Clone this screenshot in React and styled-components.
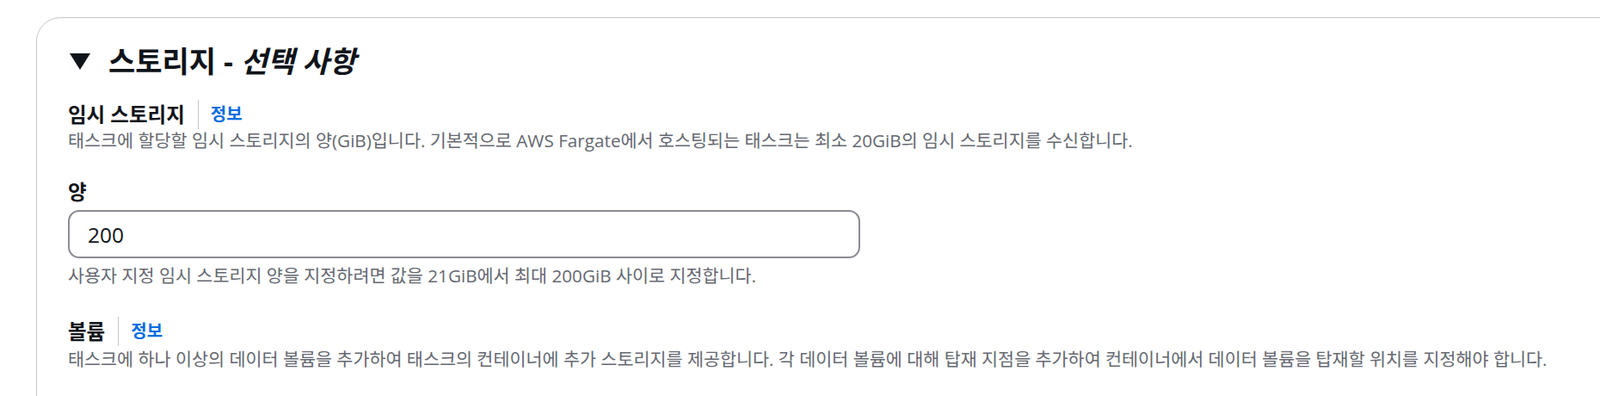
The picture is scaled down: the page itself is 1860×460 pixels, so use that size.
import React from 'react';
import styled, { createGlobalStyle } from 'styled-components';

const GlobalStyle = createGlobalStyle`
  html, body {
    margin: 0;
    padding: 0;
    background: #ffffff;
    overflow: hidden;
  }
  body {
    font-family: "Open Sans", "Noto Sans CJK KR", sans-serif;
    color: #0f141a;
  }
`;

const Page = styled.div`
  width: 1860px;
  height: 460px;
  padding: 20px 0 0 42px;
  box-sizing: border-box;
  overflow: hidden;
`;

const Card = styled.section`
  width: 1900px;
  min-height: 520px;
  border: 1px solid #c6c6cd;
  border-radius: 28px;
  box-sizing: border-box;
  padding: 30px 0 0 36px;
`;

const Header = styled.h2`
  display: flex;
  align-items: center;
  gap: 21px;
  margin: 0;
  height: 40px;
  font-size: 34px;
  line-height: 40px;
  font-weight: 700;
  color: #0f141a;
`;

const Caret = styled.svg`
  width: 24px;
  height: 19px;
  margin-left: 2px;
  flex: none;
`;

const Optional = styled.i`
  font-style: italic;
`;

const LabelRow = styled.div`
  display: flex;
  align-items: center;
  height: 30px;
  margin-top: ${(p) => p.$top}px;
`;

const Label = styled.span`
  font-size: 23.5px;
  line-height: 30px;
  font-weight: 700;
  color: #0f141a;
`;

const Divider = styled.span`
  width: 1px;
  height: 34px;
  background: #c6c6cd;
  margin: 0 14px 0 15px;
`;

const InfoLink = styled.a`
  font-size: 20px;
  font-weight: 700;
  line-height: 30px;
  color: #006ce0;
  text-decoration: none;
`;

const Description = styled.p`
  margin: ${(p) => p.$top}px 0 0;
  font-size: 20.7px;
  line-height: 28px;
  color: #656871;
  white-space: nowrap;
`;

const FieldLabel = styled.label`
  display: block;
  margin-top: 31px;
  font-size: 23.5px;
  line-height: 30px;
  font-weight: 700;
`;

const Input = styled.input`
  display: block;
  margin-top: 6px;
  width: 921px;
  height: 56px;
  box-sizing: border-box;
  border: 2px solid #8c8c94;
  border-radius: 13px;
  padding: 0 21px;
  font-family: "Open Sans", "Noto Sans CJK KR", sans-serif;
  font-size: 24.5px;
  color: #0f141a;
  background: #fff;
  outline: none;
`;

export default function App() {
  return (
    <>
      <GlobalStyle />
      <Page>
        <Card>
          <Header>
            <Caret viewBox="0 0 24 19">
              <path d="M0 0 H24 L12 19 Z" fill="#0f141a" />
            </Caret>
            <span>
              스토리지 - <Optional>선택 사항</Optional>
            </span>
          </Header>

          <LabelRow $top={27}>
            <Label>임시 스토리지</Label>
            <Divider />
            <InfoLink href="#">정보</InfoLink>
          </LabelRow>
          <Description $top={1}>
            태스크에 할당할 임시 스토리지의 양(GiB)입니다. 기본적으로 AWS Fargate에서 호스팅되는 태스크는 최소 20GiB의 임시 스토리지를 수신합니다.
          </Description>

          <FieldLabel>양</FieldLabel>
          <Input defaultValue="200" />
          <Description $top={6}>
            사용자 지정 임시 스토리지 양을 지정하려면 값을 21GiB에서 최대 200GiB 사이로 지정합니다.
          </Description>

          <LabelRow $top={36}>
            <Label>볼륨</Label>
            <Divider />
            <InfoLink href="#">정보</InfoLink>
          </LabelRow>
          <Description $top={3}>
            태스크에 하나 이상의 데이터 볼륨을 추가하여 태스크의 컨테이너에 추가 스토리지를 제공합니다. 각 데이터 볼륨에 대해 탑재 지점을 추가하여 컨테이너에서 데이터 볼륨을 탑재할 위치를 지정해야 합니다.
          </Description>
        </Card>
      </Page>
    </>
  );
}
